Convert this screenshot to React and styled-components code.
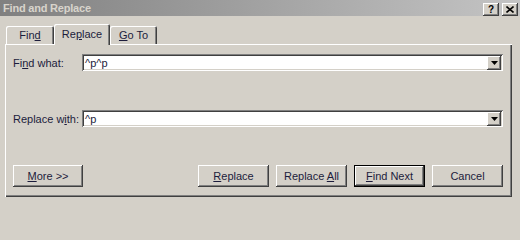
import styled, { createGlobalStyle } from 'styled-components'

const GlobalStyle = createGlobalStyle`
  html, body {
    margin: 0;
    padding: 0;
    background: #d4d0c8;
  }
  body {
    font-family: "Liberation Sans", Arial, sans-serif;
    font-size: 11px;
    color: #1c1c3c;
  }
`

const raised = `
  box-shadow: inset -1px -1px #404040, inset 1px 1px #ffffff,
    inset -2px -2px #808080, inset 2px 2px #d4d0c8;
`

const Window = styled.div`
  width: 520px;
  height: 204px;
  background: #d4d0c8;
  display: flex;
  flex-direction: column;
  overflow: hidden;
`

const TitleBar = styled.div`
  height: 16px;
  flex-shrink: 0;
  display: flex;
  align-items: center;
  justify-content: space-between;
  padding: 0 2px 0 3px;
  background: linear-gradient(to right, #808080, #c4c4c4);
`

const Title = styled.span`
  font-weight: bold;
  font-size: 11px;
  letter-spacing: -0.2px;
  color: #d8d4cc;
`

const CaptionButtons = styled.div`
  display: flex;
  gap: 3px;
  padding-top: 2px;
`

const CaptionButton = styled.div`
  width: 16px;
  height: 13px;
  background: #d4d0c8;
  ${raised}
  display: flex;
  align-items: center;
  justify-content: center;
  font-weight: bold;
  font-size: 10px;
  color: #000;
`

const Body = styled.div`
  padding: 8px 0 0 5px;
  display: flex;
  flex-direction: column;
`

const TabStrip = styled.div`
  display: flex;
  align-items: flex-end;
  height: 20px;
  padding-left: 1px;
`

const Tab = styled.div`
  position: relative;
  box-sizing: border-box;
  width: ${({ $w }) => $w}px;
  height: ${({ $active }) => ($active ? 21 : 18)}px;
  margin-bottom: ${({ $active }) => ($active ? -1 : 0)}px;
  z-index: ${({ $active }) => ($active ? 1 : 0)};
  background: #d4d0c8;
  border-radius: 2px 2px 0 0;
  box-shadow: inset 1px 1px #ffffff, inset -1px 0 #404040, inset -2px 0 #808080;
  display: flex;
  justify-content: center;
  padding-top: ${({ $active }) => ($active ? 4 : 3)}px;
  color: #1c1c3c;
`

const Panel = styled.div`
  box-sizing: border-box;
  width: 507px;
  height: 153px;
  padding: 10px 9px 0 8px;
  box-shadow: inset 1px 1px #ffffff, inset -1px -1px #404040, inset -2px -2px #808080;
  display: flex;
  flex-direction: column;
`

const FieldRow = styled.div`
  display: flex;
  align-items: center;
  height: 17px;
  margin-bottom: ${({ $gap }) => $gap}px;
`

const Label = styled.label`
  width: 69px;
  flex-shrink: 0;
`

const Combo = styled.div`
  box-sizing: border-box;
  width: 421px;
  height: 17px;
  background: #fff;
  box-shadow: inset 1px 1px #808080, inset -1px -1px #ffffff,
    inset 2px 2px #404040, inset -2px -2px #d4d0c8;
  display: flex;
  align-items: center;
  padding: 0 2px 0 3px;
`

const ComboText = styled.span`
  flex: 1;
  color: #1c1c3c;
`

const DropButton = styled.div`
  width: 14px;
  height: 14px;
  margin-top: 1px;
  background: #d4d0c8;
  ${raised}
  display: flex;
  align-items: center;
  justify-content: center;
`

const ButtonRow = styled.div`
  display: flex;
  justify-content: space-between;
  align-items: center;
`

const ButtonGroup = styled.div`
  display: flex;
  gap: 7px;
`

const Button = styled.button`
  box-sizing: border-box;
  width: ${({ $w = 71 }) => $w}px;
  height: 22px;
  padding: 0;
  font: inherit;
  color: #1c1c3c;
  background: #d4d0c8;
  border: ${({ $default }) => ($default ? '1px solid #000' : 'none')};
  ${raised}
`

const Key = styled.u`
  text-decoration-thickness: 1px;
  text-underline-offset: 1px;
`

const Arrow = () => (
  <svg width="7" height="4" viewBox="0 0 7 4">
    <path d="M0 0h7L3.5 4z" fill="#000" />
  </svg>
)

const Close = () => (
  <svg width="8" height="7" viewBox="0 0 8 7">
    <path d="M0.5 0.5L7.5 6.5M7.5 0.5L0.5 6.5" stroke="#000" strokeWidth="1.6" />
  </svg>
)

export default function App() {
  return (
    <Window>
      <GlobalStyle />
      <TitleBar>
        <Title>Find and Replace</Title>
        <CaptionButtons>
          <CaptionButton>?</CaptionButton>
          <CaptionButton>
            <Close />
          </CaptionButton>
        </CaptionButtons>
      </TitleBar>
      <Body>
        <TabStrip>
          <Tab $w={48}>
            <span>Fin<Key>d</Key></span>
          </Tab>
          <Tab $w={56} $active>
            <span>Re<Key>p</Key>lace</span>
          </Tab>
          <Tab $w={47}>
            <span><Key>G</Key>o To</span>
          </Tab>
        </TabStrip>
        <Panel>
          <FieldRow $gap={39}>
            <Label>Fi<Key>n</Key>d what:</Label>
            <Combo>
              <ComboText>^p^p</ComboText>
              <DropButton>
                <Arrow />
              </DropButton>
            </Combo>
          </FieldRow>
          <FieldRow $gap={38}>
            <Label>Replace w<Key>i</Key>th:</Label>
            <Combo>
              <ComboText>^p</ComboText>
              <DropButton>
                <Arrow />
              </DropButton>
            </Combo>
          </FieldRow>
          <ButtonRow>
            <Button $w={70}>
              <Key>M</Key>ore &gt;&gt;
            </Button>
            <ButtonGroup>
              <Button>
                <Key>R</Key>eplace
              </Button>
              <Button>
                Replace <Key>A</Key>ll
              </Button>
              <Button $default>
                <Key>F</Key>ind Next
              </Button>
              <Button>Cancel</Button>
            </ButtonGroup>
          </ButtonRow>
        </Panel>
      </Body>
    </Window>
  )
}
